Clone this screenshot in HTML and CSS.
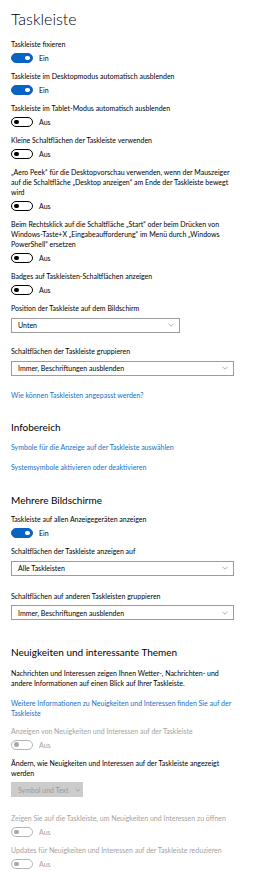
FILE: index.html
```html
<!DOCTYPE html>
<html lang="de">
<head>
<meta charset="utf-8">
<title>Taskleiste</title>
<link rel="stylesheet" href="styles.css">
</head>
<body>
<div class="page">
  <h1 class="title">Taskleiste</h1>

  <div class="setting">
    <div class="label">Taskleiste fixieren</div>
    <div class="toggle-row"><span class="toggle on"><span class="knob"></span></span><span class="state">Ein</span></div>
  </div>
  <div class="setting">
    <div class="label">Taskleiste im Desktopmodus automatisch ausblenden</div>
    <div class="toggle-row"><span class="toggle on"><span class="knob"></span></span><span class="state">Ein</span></div>
  </div>
  <div class="setting">
    <div class="label">Taskleiste im Tablet-Modus automatisch ausblenden</div>
    <div class="toggle-row"><span class="toggle"><span class="knob"></span></span><span class="state">Aus</span></div>
  </div>
  <div class="setting">
    <div class="label">Kleine Schaltflächen der Taskleiste verwenden</div>
    <div class="toggle-row"><span class="toggle"><span class="knob"></span></span><span class="state">Aus</span></div>
  </div>
  <div class="setting">
    <div class="label">„Aero Peek“ für die Desktopvorschau verwenden, wenn der Mauszeiger auf die Schaltfläche „Desktop anzeigen“ am Ende der Taskleiste bewegt wird</div>
    <div class="toggle-row"><span class="toggle"><span class="knob"></span></span><span class="state">Aus</span></div>
  </div>
  <div class="setting">
    <div class="label">Beim Rechtsklick auf die Schaltfläche „Start“ oder beim Drücken von Windows-Taste+X „Eingabeaufforderung“ im Menü durch „Windows PowerShell“ ersetzen</div>
    <div class="toggle-row"><span class="toggle"><span class="knob"></span></span><span class="state">Aus</span></div>
  </div>
  <div class="setting">
    <div class="label">Badges auf Taskleisten-Schaltflächen anzeigen</div>
    <div class="toggle-row"><span class="toggle"><span class="knob"></span></span><span class="state">Aus</span></div>
  </div>
  <div class="setting-select">
    <div class="label">Position der Taskleiste auf dem Bildschirm</div>
    <div class="select narrow"><span>Unten</span><svg class="chev" viewBox="0 0 6 4"><polyline points="0.5,0.8 3,3.2 5.5,0.8"/></svg></div>
  </div>
  <div class="setting-select">
    <div class="label">Schaltflächen der Taskleiste gruppieren</div>
    <div class="select wide"><span>Immer, Beschriftungen ausblenden</span><svg class="chev" viewBox="0 0 6 4"><polyline points="0.5,0.8 3,3.2 5.5,0.8"/></svg></div>
  </div>
  <a class="link first-link">Wie können Taskleisten angepasst werden?</a>

  <h2 class="heading h-info">Infobereich</h2>
  <a class="link link-a">Symbole für die Anzeige auf der Taskleiste auswählen</a>
  <a class="link link-b">Systemsymbole aktivieren oder deaktivieren</a>

  <h2 class="heading h-multi">Mehrere Bildschirme</h2>
  <div class="setting">
    <div class="label">Taskleiste auf allen Anzeigegeräten anzeigen</div>
    <div class="toggle-row"><span class="toggle on"><span class="knob"></span></span><span class="state">Ein</span></div>
  </div>
  <div class="setting-select sel-c">
    <div class="label">Schaltflächen der Taskleiste anzeigen auf</div>
    <div class="select wide"><span>Alle Taskleisten</span><svg class="chev" viewBox="0 0 6 4"><polyline points="0.5,0.8 3,3.2 5.5,0.8"/></svg></div>
  </div>
  <div class="setting-select">
    <div class="label">Schaltflächen auf anderen Taskleisten gruppieren</div>
    <div class="select wide"><span>Immer, Beschriftungen ausblenden</span><svg class="chev" viewBox="0 0 6 4"><polyline points="0.5,0.8 3,3.2 5.5,0.8"/></svg></div>
  </div>

  <h2 class="heading h-news">Neuigkeiten und interessante Themen</h2>
  <p class="para">Nachrichten und Interessen zeigen Ihnen Wetter-, Nachrichten- und andere Informationen auf einen Blick auf Ihrer Taskleiste.</p>
  <a class="link link-news">Weitere Informationen zu Neuigkeiten und Interessen finden Sie auf der Taskleiste</a>

  <div class="setting disabled">
    <div class="label">Anzeigen von Neuigkeiten und Interessen auf der Taskleiste</div>
    <div class="toggle-row"><span class="toggle"><span class="knob"></span></span><span class="state">Aus</span></div>
  </div>
  <div class="setting-select sel-e">
    <div class="label">Ändern, wie Neuigkeiten und Interessen auf der Taskleiste angezeigt werden</div>
    <div class="select off"><span>Symbol und Text</span><svg class="chev" viewBox="0 0 6 4"><polyline points="0.5,0.8 3,3.2 5.5,0.8"/></svg></div>
  </div>
  <div class="setting disabled">
    <div class="label">Zeigen Sie auf die Taskleiste, um Neuigkeiten und Interessen zu öffnen</div>
    <div class="toggle-row"><span class="toggle"><span class="knob"></span></span><span class="state">Aus</span></div>
  </div>
  <div class="setting disabled">
    <div class="label">Updates für Neuigkeiten und Interessen auf der Taskleiste reduzieren</div>
    <div class="toggle-row"><span class="toggle"><span class="knob"></span></span><span class="state">Aus</span></div>
  </div>
</div>
</body>
</html>
```

FILE: styles.css
```css
* { box-sizing: border-box; }
html, body { margin: 0; padding: 0; background: #fff; }
body {
  font-family: Lato, "Noto Sans", sans-serif;
  color: #000;
  font-size: 7px;
}
.page {
  padding: 9px 11px 0 11px;
  width: 260px;
  display: flex;
  flex-direction: column;
  align-items: flex-start;
}
.title {
  margin: 0 0 10px 0;
  font-size: 16px;
  font-weight: 300;
  line-height: 20px;
}
.label {
  font-size: 7px;
  line-height: 10px;
  width: 224px;
}
.setting { margin-bottom: 8px; }
.toggle-row {
  margin-top: 4px;
  height: 10px;
  display: flex;
  align-items: center;
  gap: 6px;
}
.toggle {
  width: 22px;
  height: 10px;
  border: 1px solid #000;
  border-radius: 5px;
  display: flex;
  align-items: center;
  padding: 0 2px;
}
.knob {
  width: 4.6px;
  height: 4.6px;
  border-radius: 50%;
  background: #000;
}
.toggle.on {
  background: #0a63c2;
  border-color: #0a63c2;
  justify-content: flex-end;
}
.toggle.on .knob { background: #fff; }
.state { font-size: 7px; line-height: 10px; }

.setting-select { margin-bottom: 13.5px; }
.select {
  margin-top: 4.5px;
  height: 15px;
  border: 1px solid #9c9c9c;
  display: flex;
  align-items: center;
  justify-content: space-between;
  padding: 0 5px 0 6px;
  font-size: 7px;
  white-space: nowrap;
}
.select.narrow { width: 169px; }
.select.wide { width: 223px; }
.chev {
  width: 6px;
  height: 4px;
  flex: none;
  fill: none;
  stroke: #8a8a8a;
  stroke-width: 0.7;
}
.select.off {
  width: 72px;
  background: #cccccc;
  border-color: #cccccc;
  color: #9a9a9a;
  justify-content: flex-start;
  gap: 6px;
  padding: 0 5px 0 6px;
}
.select.off .chev { stroke: #9a9a9a; }

.link {
  display: block;
  color: #1570c9;
  font-size: 7px;
  line-height: 10px;
  width: 226px;
}
.first-link { margin-top: 1px; }
.heading {
  margin: 0;
  font-size: 10px;
  font-weight: 400;
  line-height: 14px;
}
.h-info { margin-top: 20px; margin-bottom: 8px; }
.link-a { margin-bottom: 10px; }
.h-multi { margin-top: 20.5px; margin-bottom: 7.5px; }
.sel-c { margin-bottom: 15px; }
.h-news { margin-top: 11px; margin-bottom: 9px; }
.para {
  margin: 0 0 10px 0;
  font-size: 7px;
  line-height: 10px;
  width: 222px;
}
.link-news { margin-bottom: 8px; width: 228px; }
.disabled .label, .disabled .state { color: #a3a3a3; }
.disabled .toggle { border-color: #b5b5b5; }
.disabled .knob { background: #a8a8a8; }
.sel-e { margin-bottom: 16px; }
```
